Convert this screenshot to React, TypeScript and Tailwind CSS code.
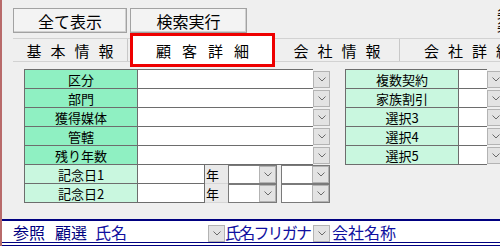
import React from 'react';

const LINE = 'border-[#6d6d6d]';

const Chevron = () => (
  <svg width="8" height="5" viewBox="0 0 8 5">
    <path d="M0.5 0.5 L4 4 L7.5 0.5" fill="none" stroke="#6a6a6a" strokeWidth="1" />
  </svg>
);

const DropBtn = () => (
  <div className="w-[17px] h-[17px] shrink-0 flex items-center justify-center bg-[#e3e3e3] border border-[#b3b3b3]">
    <Chevron />
  </div>
);

const mainRows = ['区分', '部門', '獲得媒体', '管轄', '残り年数'];
const optRows = ['複数契約', '家族割引', '選択3', '選択4', '選択5'];

const SelectBox = () => (
  <div className="w-[49px] h-[19px] flex justify-end items-center bg-white border border-[#7a7a7a]">
    <DropBtn />
  </div>
);

const GridRow = ({ label, first, width, bg }: { label: string; first: boolean; width: string; bg: string }) => (
  <div className={`flex items-end ${first ? 'h-[20px]' : 'h-[19px]'}`}>
    <div className={`flex h-full ${width} border-l border-b ${LINE} ${first ? 'border-t' : ''}`}>
      <div className={`w-[113px] border-r ${LINE} ${bg} flex items-center justify-center`}>{label}</div>
      <div className="flex-1 bg-white" />
    </div>
    <div className="self-end mb-[1px]">
      <DropBtn />
    </div>
  </div>
);

export default function App() {
  return (
    <div className="w-[500px] h-[246px] overflow-hidden bg-[#efefef] border-l-2 border-[#b86a6a] flex flex-col font-['Noto_Sans_CJK_JP','Noto_Sans',sans-serif] text-black">
      {/* toolbar */}
      <div className="flex items-start pt-[8px] pl-[11px] h-[33px]">
        <button className="w-[114px] h-[25px] text-[16px] leading-none bg-[#f3f3f3] border border-[#a2a2a2] shadow-[inset_-1px_-1px_0_#d0d0d0]">
          全て表示
        </button>
        <button className="ml-[3px] w-[117px] h-[25px] text-[16px] leading-none bg-[#f3f3f3] border border-[#a2a2a2] shadow-[inset_-1px_-1px_0_#d0d0d0]">
          検索実行
        </button>
        <div className="ml-auto mr-[-10px] -mt-[2px] flex flex-col text-[13px] leading-[13px] w-[13px] shrink-0">
          <span>条</span>
          <span>条</span>
        </div>
      </div>

      {/* tabs */}
      <div className="mt-[5px] ml-[11px] h-[24px] flex border-t border-b border-[#d2d2d2] text-[15px] leading-none whitespace-nowrap">
        <div className="w-[115px] shrink-0 flex items-center justify-center pl-[9px] tracking-[9px] border-r border-[#c8c8c8]">
          基本情報
        </div>
        <div className="relative z-10 -my-[6px] ml-[2px] w-[145px] shrink-0 flex items-center justify-center pl-[11px] tracking-[11px] bg-white border-[3px] border-[#ee0000]">
          顧客詳細
        </div>
        <div className="w-[125px] shrink-0 flex items-center justify-center pl-[9px] tracking-[9px] border-r border-[#c8c8c8]">
          会社情報
        </div>
        <div className="w-[135px] shrink-0 flex items-center justify-center pl-[9px] tracking-[9px]">
          会社詳細
        </div>
      </div>

      {/* form */}
      <div className="mt-[7px] pl-[22px] flex items-start gap-[15px] text-[13px] leading-none">
        <div className="flex flex-col">
          {mainRows.map((l, i) => (
            <GridRow key={l} label={l} first={i === 0} width="w-[289px]" bg="bg-[#8ff0c2]" />
          ))}
          {['記念日1', '記念日2'].map((l) => (
            <div key={l} className="flex items-start h-[19px]">
              <div className={`flex h-[19px] w-[181px] border-l border-b ${LINE}`}>
                <div className={`w-[113px] border-r ${LINE} bg-[#c9f7df] flex items-center justify-center`}>{l}</div>
                <div className={`flex-1 bg-white border-r ${LINE}`} />
              </div>
              <div className="w-[23px] h-[19px] bg-[#e9e9e9] border-b border-[#d6d6d6] flex items-center pl-[1px]">年</div>
              <SelectBox />
              <div className="ml-[4px]">
                <SelectBox />
              </div>
            </div>
          ))}
        </div>

        <div className="flex flex-col">
          {optRows.map((l, i) => (
            <GridRow key={l} label={l} first={i === 0} width="w-[142px]" bg="bg-[#c9f7df]" />
          ))}
        </div>
      </div>

      {/* list header */}
      <div className="mt-auto h-[27px] flex items-center pl-[11px] bg-white border-t-2 border-b-[4px] border-double border-[#000080] text-[16px] leading-none text-[#000080] whitespace-nowrap">
        <span className="w-[42px]">参照</span>
        <span className="w-[40px]">顧選</span>
        <span className="w-[113px] text-[#1010a0]">氏名</span>
        <div className="self-end">
          <DropBtn />
        </div>
        <span className="w-[88px] tracking-[-1.8px] text-[#1010a0]">氏名フリガナ</span>
        <div className="self-end">
          <DropBtn />
        </div>
        <span className="ml-[2px] text-[#1010a0]">会社名称</span>
      </div>
    </div>
  );
}
